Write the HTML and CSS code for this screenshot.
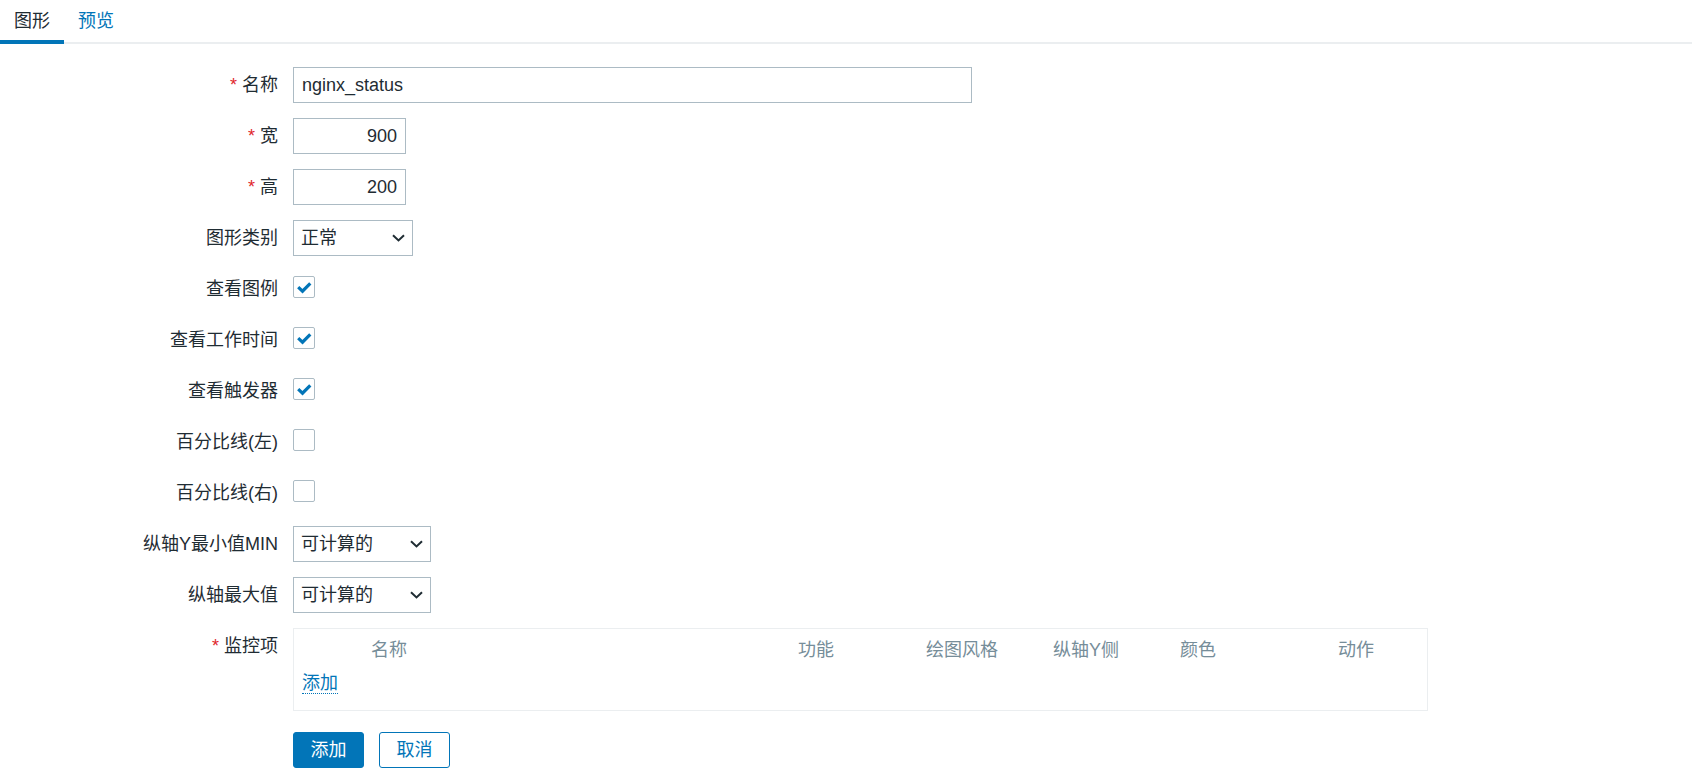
FILE: index.html
```html
<!DOCTYPE html>
<html lang="zh-CN">
<head>
<meta charset="utf-8">
<title>图形</title>
<link rel="stylesheet" href="styles.css">
</head>
<body>
<div class="tabs">
  <span class="tab active">图形</span>
  <span class="tab link">预览</span>
</div>
<div class="form">
  <div class="row">
    <div class="lbl req">名称</div>
    <div class="ctl"><div class="txt w-name">nginx_status</div></div>
  </div>
  <div class="row">
    <div class="lbl req">宽</div>
    <div class="ctl"><div class="txt w-num num">900</div></div>
  </div>
  <div class="row">
    <div class="lbl req">高</div>
    <div class="ctl"><div class="txt w-num num">200</div></div>
  </div>
  <div class="row">
    <div class="lbl">图形类别</div>
    <div class="ctl"><div class="sel w-type"><span>正常</span><svg class="chev" width="13" height="8" viewBox="0 0 13 8"><path d="M1 1.2 L6.5 6.4 L12 1.2" fill="none" stroke="#1f2c33" stroke-width="2"/></svg></div></div>
  </div>
  <div class="row">
    <div class="lbl">查看图例</div>
    <div class="ctl cb-ctl"><span class="cb"><svg width="20" height="20" viewBox="0 0 20 20"><path d="M4.2 10.2 L8.5 14.2 L16.3 6.4" fill="none" stroke="#0275b8" stroke-width="3.2"/></svg></span></div>
  </div>
  <div class="row">
    <div class="lbl">查看工作时间</div>
    <div class="ctl cb-ctl"><span class="cb"><svg width="20" height="20" viewBox="0 0 20 20"><path d="M4.2 10.2 L8.5 14.2 L16.3 6.4" fill="none" stroke="#0275b8" stroke-width="3.2"/></svg></span></div>
  </div>
  <div class="row">
    <div class="lbl">查看触发器</div>
    <div class="ctl cb-ctl"><span class="cb"><svg width="20" height="20" viewBox="0 0 20 20"><path d="M4.2 10.2 L8.5 14.2 L16.3 6.4" fill="none" stroke="#0275b8" stroke-width="3.2"/></svg></span></div>
  </div>
  <div class="row">
    <div class="lbl">百分比线(左)</div>
    <div class="ctl cb-ctl"><span class="cb"></span></div>
  </div>
  <div class="row">
    <div class="lbl">百分比线(右)</div>
    <div class="ctl cb-ctl"><span class="cb"></span></div>
  </div>
  <div class="row">
    <div class="lbl">纵轴Y最小值MIN</div>
    <div class="ctl"><div class="sel w-axis"><span>可计算的</span><svg class="chev" width="13" height="8" viewBox="0 0 13 8"><path d="M1 1.2 L6.5 6.4 L12 1.2" fill="none" stroke="#1f2c33" stroke-width="2"/></svg></div></div>
  </div>
  <div class="row">
    <div class="lbl">纵轴最大值</div>
    <div class="ctl"><div class="sel w-axis"><span>可计算的</span><svg class="chev" width="13" height="8" viewBox="0 0 13 8"><path d="M1 1.2 L6.5 6.4 L12 1.2" fill="none" stroke="#1f2c33" stroke-width="2"/></svg></div></div>
  </div>
  <div class="row row-items">
    <div class="lbl req">监控项</div>
    <div class="ctl">
      <div class="items">
        <div class="items-head">
          <span></span>
          <span>名称</span>
          <span>功能</span>
          <span>绘图风格</span>
          <span>纵轴Y侧</span>
          <span>颜色</span>
          <span>动作</span>
        </div>
        <div class="items-add"><span class="dotted">添加</span></div>
      </div>
    </div>
  </div>
  <div class="row">
    <div class="lbl"></div>
    <div class="ctl buttons">
      <span class="btn primary">添加</span>
      <span class="btn alt">取消</span>
    </div>
  </div>
</div>
</body>
</html>
```

FILE: styles.css
```css
html, body {
  margin: 0;
  padding: 0;
  background: #ffffff;
}
body {
  font-family: "Liberation Sans", "Noto Sans CJK SC", sans-serif;
  font-size: 18px;
  color: #1f2c33;
}
.tabs {
  display: flex;
  align-items: flex-start;
  height: 42px;
  border-bottom: 2px solid #ebeef0;
}
.tab {
  box-sizing: border-box;
  height: 44px;
  line-height: 42px;
  padding: 0 14px;
  border-bottom: 4px solid transparent;
  white-space: nowrap;
}
.tab.active {
  border-bottom-color: #0275b8;
  color: #1f2c33;
}
.tab.link {
  color: #0275b8;
}
.form {
  padding-top: 23px;
}
.row {
  display: grid;
  grid-template-columns: 278px 1fr;
  column-gap: 15px;
  min-height: 36px;
  margin-bottom: 15px;
}
.lbl {
  text-align: right;
  line-height: 36px;
  white-space: nowrap;
}
.lbl.req::before {
  content: "*";
  color: #e0262c;
  margin-right: 5px;
  font-family: "Liberation Sans", sans-serif;
}
.ctl {
  display: flex;
  align-items: flex-start;
}
.txt, .sel {
  box-sizing: border-box;
  height: 36px;
  line-height: 34px;
  border: 1px solid #acbbc4;
  background: #fff;
  padding: 0 8px;
  white-space: nowrap;
}
.w-name { width: 679px; }
.w-num { width: 113px; }
.num { text-align: right; }
.sel {
  display: flex;
  align-items: center;
  justify-content: space-between;
  padding: 0 7px 0 7px;
}
.w-type { width: 120px; }
.w-axis { width: 138px; }
.chev { display: block; }
.cb-ctl {
  padding-top: 5px;
}
.cb {
  box-sizing: border-box;
  width: 22px;
  height: 22px;
  border: 1px solid #acbbc4;
  border-radius: 2px;
  background: #fff;
  display: flex;
  align-items: center;
  justify-content: center;
}
.cb svg { display: block; }
.row-items {
  margin-bottom: 21px;
}
.items {
  box-sizing: border-box;
  width: 1135px;
  height: 83px;
  border: 1px solid #ebeef0;
  padding-top: 6px;
}
.items-head {
  display: grid;
  grid-template-columns: 77px 427px 128px 127px 127px 158px 1fr;
  height: 30px;
  line-height: 30px;
  color: #768d99;
  white-space: nowrap;
}
.items-add {
  padding: 8px 0 0 8px;
}
.dotted {
  display: inline-block;
  line-height: 20px;
  color: #0275b8;
  border-bottom: 1px dotted #0275b8;
}
.buttons {
  gap: 15px;
}
.btn {
  box-sizing: border-box;
  height: 36px;
  line-height: 34px;
  padding: 0 16.5px;
  border: 1px solid #0275b8;
  border-radius: 3px;
  white-space: nowrap;
}
.btn.primary {
  background: #0275b8;
  color: #ffffff;
}
.btn.alt {
  background: #ffffff;
  color: #0275b8;
}
```
